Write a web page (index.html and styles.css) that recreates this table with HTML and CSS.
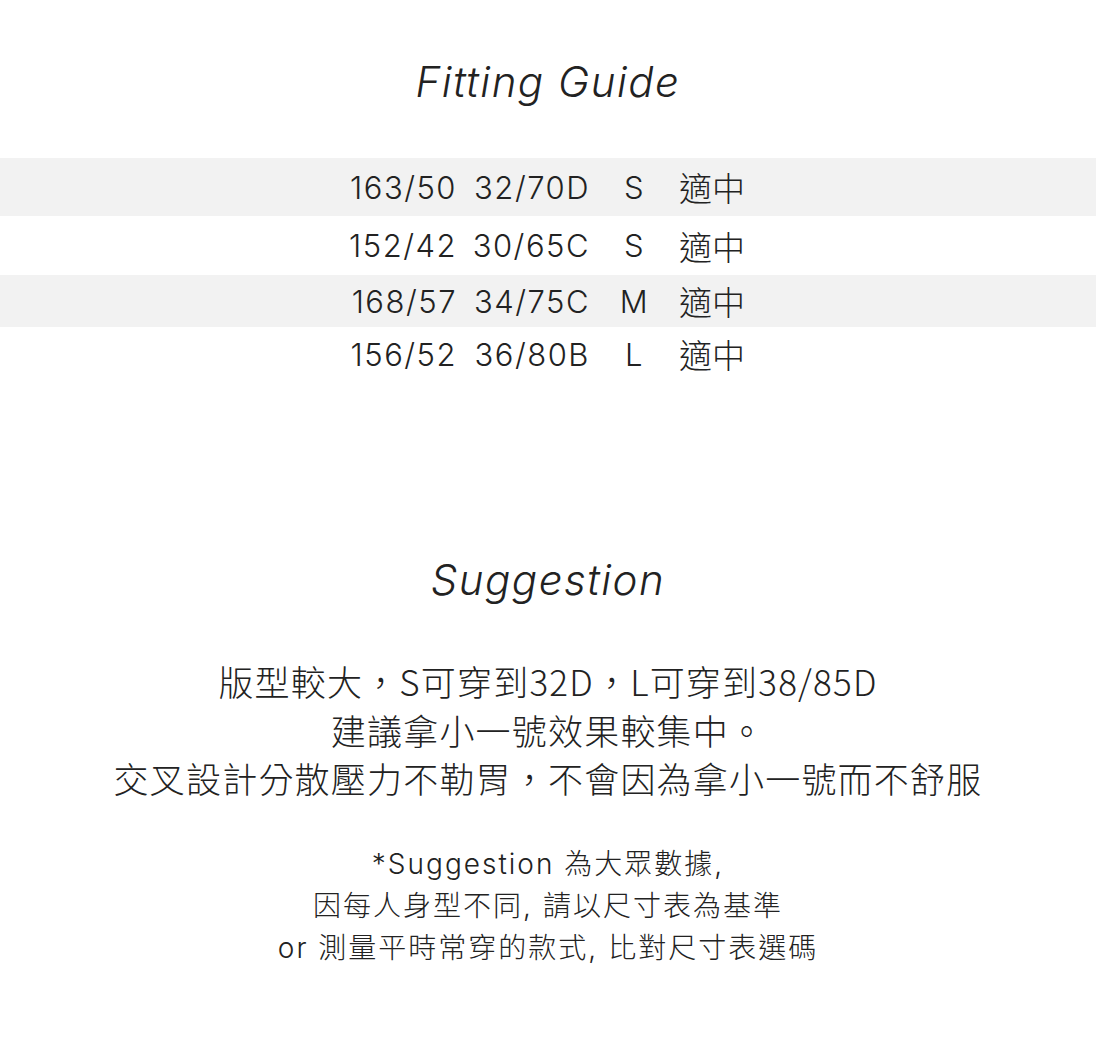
FILE: index.html
```html
<!DOCTYPE html>
<html lang="zh-Hant">
<head>
<meta charset="utf-8">
<title>Fitting Guide</title>
<link rel="stylesheet" href="styles.css">
</head>
<body>
<main class="page">
  <h1 class="title title-fit">Fitting Guide</h1>
  <div class="table">
    <div class="row row-a shade"><span class="c1">163/50</span><span class="c2">32/70D</span><span class="c3">S</span><span class="c4">適中</span></div>
    <div class="row row-b"><span class="c1">152/42</span><span class="c2">30/65C</span><span class="c3">S</span><span class="c4">適中</span></div>
    <div class="row row-c shade"><span class="c1">168/57</span><span class="c2">34/75C</span><span class="c3">M</span><span class="c4">適中</span></div>
    <div class="row row-d"><span class="c1">156/52</span><span class="c2">36/80B</span><span class="c3">L</span><span class="c4">適中</span></div>
  </div>
  <h2 class="title title-sug">Suggestion</h2>
  <p class="advice">版型較大，S可穿到32D，L可穿到38/85D<br>建議拿小一號效果較集中。<br>交叉設計分散壓力不勒胃，不會因為拿小一號而不舒服</p>
  <p class="note">*Suggestion 為大眾數據,<br>因每人身型不同, 請以尺寸表為基準<br>or 測量平時常穿的款式, 比對尺寸表選碼</p>
</main>
</body>
</html>
```

FILE: styles.css
```css
html, body {
  margin: 0;
  padding: 0;
  background: #ffffff;
}
body {
  font-family: "Inter", "Noto Sans CJK TC", sans-serif;
  color: #222222;
}
.page {
  width: 1096px;
  display: flex;
  flex-direction: column;
  align-items: stretch;
  padding-top: 58px;
}
.title {
  margin: 0;
  text-align: center;
  font-family: "Inter", sans-serif;
  font-style: italic;
  font-weight: 300;
  font-size: 42px;
  line-height: 48px;
  letter-spacing: 1.5px;
  color: #222222;
}
.title-fit {
  margin-bottom: 52px;
}
.table {
  display: flex;
  flex-direction: column;
}
.row {
  display: flex;
  justify-content: center;
  align-items: center;
  font-size: 31px;
  font-weight: 300;
  letter-spacing: 1.5px;
}
.row-a { height: 58px; }
.row-b { height: 59px; }
.row-c { height: 52px; }
.row-d { height: 54px; }
.shade {
  background: #f2f2f2;
}
.c1 {
  width: 110px;
  text-align: right;
}
.c2 {
  width: 133px;
  text-align: right;
}
.c3 {
  width: 89px;
  text-align: center;
}
.c4 {
  width: 70px;
  font-family: "Noto Sans CJK TC", sans-serif;
  font-weight: 300;
  font-size: 33px;
  letter-spacing: 0;
  text-align: left;
}
.title-sug {
  margin-top: 175px;
}
.advice {
  margin: 53px 0 0;
  text-align: center;
  font-family: "Noto Sans CJK TC", sans-serif;
  font-weight: 300;
  font-size: 35px;
  line-height: 48.5px;
  letter-spacing: 1.2px;
  color: #222222;
}
.note {
  margin: 40px 0 0;
  text-align: center;
  font-family: "Inter", "Noto Sans CJK TC", sans-serif;
  font-weight: 300;
  font-size: 28px;
  line-height: 42px;
  letter-spacing: 2px;
  color: #222222;
}
```
